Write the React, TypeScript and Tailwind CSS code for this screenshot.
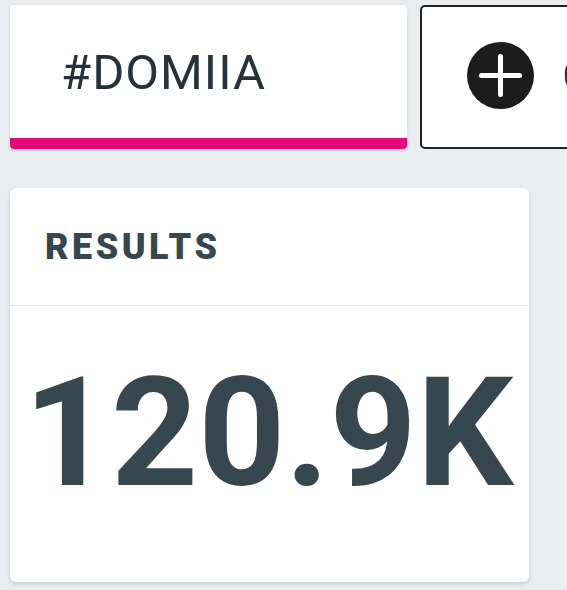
export default function App() {
  return (
    <div
      className="w-[567px] h-[590px] overflow-hidden bg-[#e9edf0] pt-[5px] pl-[10px]"
      style={{ fontFamily: "Roboto, 'Noto Sans', sans-serif" }}
    >
      {/* Tabs row */}
      <div className="flex items-start gap-[13px]">
        <div className="w-[397px] h-[144px] flex flex-col bg-white rounded-t-[4px] shadow-[0_1px_3px_rgba(0,0,0,0.12)] shrink-0">
          <div className="flex-1 flex items-center pl-[51px] pt-[2px]">
            <span className="text-[49px] leading-none text-[#263238] tracking-[1px]">#DOMIIA</span>
          </div>
          <div className="h-[11px] bg-[#e5077b] rounded-b-[4px]" />
        </div>
        <div className="h-[144px] w-[300px] shrink-0 flex items-center gap-[28px] pl-[45px] pb-[4px] bg-white border-2 border-[#222] rounded-[5px]">
          <svg width="67" height="67" viewBox="0 0 67 67" className="shrink-0">
            <circle cx="33.5" cy="33.5" r="33.5" fill="#1c1c1c" />
            <path d="M33.5 14.5v38M14.5 33.5h38" stroke="#fff" strokeWidth="5" strokeLinecap="round" />
          </svg>
          <span className="text-[49px] leading-none text-[#263238]">Compare</span>
        </div>
      </div>

      {/* Results card */}
      <div className="mt-[39px] w-[519px] h-[394px] flex flex-col bg-white rounded-[6px] shadow-[0_2px_4px_rgba(0,0,0,0.14)]">
        <div className="h-[118px] flex items-center pl-[35px] border-b border-[#e6e9ec]">
          <h2 className="text-[36px] leading-none font-black text-[#37474f] tracking-[3.5px]">RESULTS</h2>
        </div>
        <div className="flex-1 flex items-center justify-center pb-[22px] pr-[2px]">
          <span className="text-[152px] leading-none font-bold text-[#37474f]">120.9K</span>
        </div>
      </div>
    </div>
  );
}
